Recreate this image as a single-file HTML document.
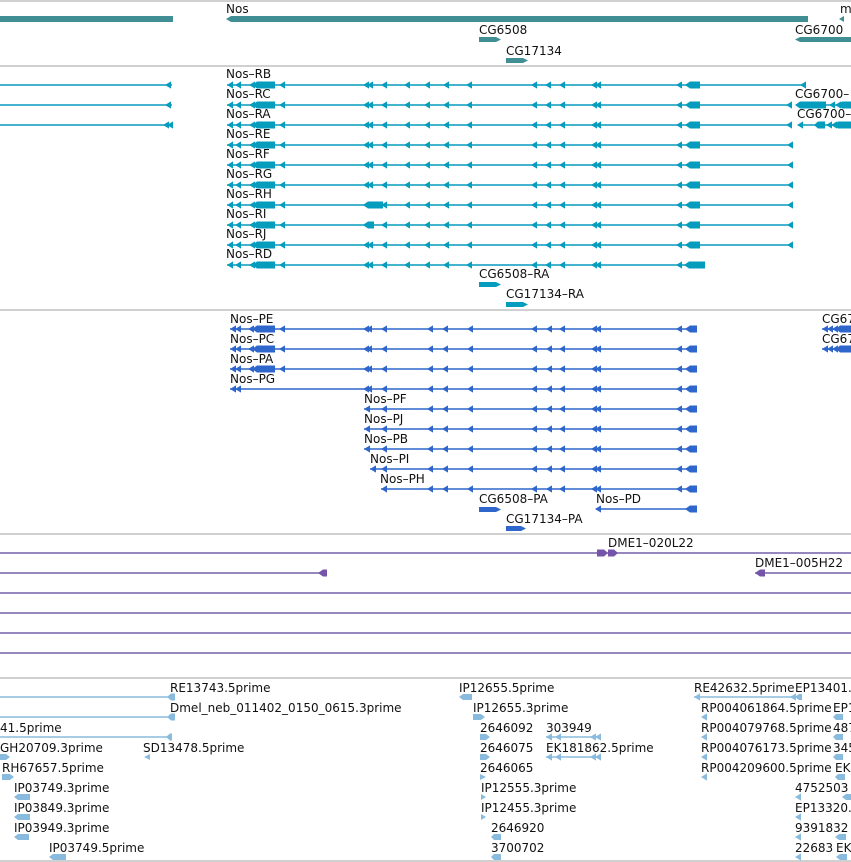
<!DOCTYPE html>
<html><head><meta charset="utf-8"><style>
html,body{margin:0;padding:0;background:#fff;width:851px;height:862px;overflow:hidden}
svg{display:block}
text{font-family:"DejaVu Sans","Liberation Sans",sans-serif;font-size:12px;fill:#111}
</style></head><body>
<svg width="851" height="862" viewBox="0 0 851 862" xmlns="http://www.w3.org/2000/svg">
<defs>
<path id="L" d="M0 0L6 -3.6L6 3.6Z"/>
<path id="R" d="M0 -3.6L6 0L0 3.6Z"/>
<g id="cy">
<use href="#L" x="227"/><use href="#L" x="235"/><use href="#L" x="249"/>
<path d="M252 0L257 -3.5H275V3.5H257Z"/>
<use href="#L" x="279"/><use href="#L" x="363"/><use href="#L" x="367"/><use href="#L" x="381"/>
<use href="#L" x="404"/><use href="#L" x="424"/><use href="#L" x="443"/><use href="#L" x="466"/>
<use href="#L" x="531"/><use href="#L" x="545"/><use href="#L" x="559"/><use href="#L" x="591"/><use href="#L" x="595"/>
<use href="#L" x="676"/><path d="M685 0L690 -3.5H700V3.5H690Z"/>
</g>
<g id="bl">
<use href="#L" x="230"/><use href="#L" x="235"/><use href="#L" x="248"/>
<path d="M252 0L257 -3.5H275V3.5H257Z"/>
<use href="#L" x="279"/><use href="#L" x="363"/><use href="#L" x="366"/><use href="#L" x="381"/>
<use href="#L" x="427"/><use href="#L" x="442"/><use href="#L" x="467"/><use href="#L" x="531"/>
<use href="#L" x="546"/><use href="#L" x="559"/><use href="#L" x="591"/><use href="#L" x="595"/>
<use href="#L" x="676"/><path d="M685 0L690 -3.5H697V3.5H690Z"/>
</g>
</defs>
<g stroke="#c0c0c0" stroke-width="1.5">
<line x1="0" y1="1" x2="851" y2="1"/><line x1="0" y1="66" x2="851" y2="66"/>
<line x1="0" y1="310" x2="851" y2="310"/><line x1="0" y1="534" x2="851" y2="534"/>
<line x1="0" y1="678" x2="851" y2="678"/><line x1="0" y1="861" x2="851" y2="861"/>
</g>
<g fill="#418f94">
<rect x="0" y="16" width="173" height="6"/>
<path d="M226 19L231 16H808V22H231Z"/>
<path d="M839 19L844 16V22Z"/>
<path d="M479 37H496L501 39.5L496 42H479Z"/>
<path d="M506 58H523L528 60.5L523 63H506Z"/>
<path d="M795 39.5L800 37H851V42H800Z"/>
</g>
<text x="226" y="13">Nos</text><text x="840" y="13">m</text>
<text x="479" y="34">CG6508</text><text x="506" y="55">CG17134</text><text x="795" y="34">CG6700</text>
<g fill="#069cbd" stroke="none">
<g stroke="#069cbd" stroke-width="1.5">
<line x1="0" y1="85" x2="172" y2="85"/><line x1="0" y1="105" x2="172" y2="105"/><line x1="0" y1="125" x2="172" y2="125"/>
<line x1="227" y1="85" x2="805" y2="85"/>
<line x1="227" y1="105" x2="790" y2="105"/><line x1="797" y1="105" x2="851" y2="105"/>
<line x1="227" y1="125" x2="790" y2="125"/><line x1="800" y1="125" x2="851" y2="125"/>
<line x1="227" y1="145" x2="791" y2="145"/><line x1="227" y1="165" x2="791" y2="165"/>
<line x1="227" y1="185" x2="791" y2="185"/><line x1="227" y1="205" x2="791" y2="205"/>
<line x1="227" y1="225" x2="791" y2="225"/><line x1="227" y1="245" x2="791" y2="245"/>
<line x1="227" y1="265" x2="700" y2="265"/>
</g>
<use href="#L" x="165" y="85"/><use href="#L" x="165" y="105"/><use href="#L" x="163" y="125"/><use href="#L" x="167" y="125"/>
<use href="#cy" y="85"/><use href="#L" x="800" y="85"/>
<use href="#cy" y="105"/><use href="#L" x="786" y="105"/>
<path d="M795 105L800 101.5H826V108.5H800Z"/><use href="#L" x="829" y="105"/><use href="#L" x="835" y="105"/><path d="M838 105L842 101.5H851V108.5H842Z"/>
<use href="#cy" y="125"/><use href="#L" x="786" y="125"/>
<use href="#L" x="797" y="125"/><path d="M814 125L818 121.5H825V128.5H818Z"/><use href="#L" x="826" y="125"/><use href="#L" x="831" y="125"/><path d="M834 125L838 121.5H851V128.5H838Z"/>
<use href="#cy" y="145"/><use href="#L" x="787" y="145"/>
<use href="#cy" y="165"/><use href="#L" x="787" y="165"/>
<use href="#cy" y="185"/><use href="#L" x="787" y="185"/>
<use href="#cy" y="205"/><use href="#L" x="787" y="205"/><path d="M363 205L368 201.5H383V208.5H368Z"/>
<use href="#cy" y="225"/><use href="#L" x="787" y="225"/><path d="M363 225L368 221.5H374V228.5H368Z"/>
<use href="#cy" y="245"/><use href="#L" x="787" y="245"/>
<use href="#cy" y="265"/><path d="M684 265L689 261.5H705V268.5H689Z"/>
<path d="M479 282H496L501 284.5L496 287H479Z"/>
<path d="M506 302H523L528 304.5L523 307H506Z"/>
</g>
<text x="226" y="78">Nos–RB</text><text x="226" y="98">Nos–RC</text><text x="226" y="118">Nos–RA</text>
<text x="226" y="138">Nos–RE</text><text x="226" y="158">Nos–RF</text><text x="226" y="178">Nos–RG</text>
<text x="226" y="198">Nos–RH</text><text x="226" y="218">Nos–RI</text><text x="226" y="238">Nos–RJ</text>
<text x="226" y="258">Nos–RD</text>
<text x="795" y="98">CG6700–</text><text x="797" y="118">CG6700–</text>
<text x="479" y="278">CG6508–RA</text><text x="506" y="298">CG17134–RA</text>
<g fill="#2f66cc">
<g stroke="#2f66cc" stroke-width="1.5">
<line x1="230" y1="329" x2="697" y2="329"/><line x1="230" y1="349" x2="697" y2="349"/>
<line x1="230" y1="369" x2="697" y2="369"/><line x1="230" y1="389" x2="697" y2="389"/>
<line x1="364" y1="409" x2="697" y2="409"/><line x1="364" y1="429" x2="697" y2="429"/>
<line x1="364" y1="449" x2="697" y2="449"/><line x1="370" y1="469" x2="697" y2="469"/>
<line x1="381" y1="489" x2="697" y2="489"/><line x1="596" y1="509" x2="697" y2="509"/>
<line x1="822" y1="329" x2="851" y2="329"/><line x1="822" y1="349" x2="851" y2="349"/>
</g>
<use href="#bl" y="329"/><use href="#bl" y="349"/><use href="#bl" y="369"/>
<g transform="translate(0,389)"><use href="#L" x="230"/><use href="#L" x="235"/><use href="#L" x="363"/><use href="#L" x="366"/><use href="#L" x="381"/><use href="#L" x="427"/><use href="#L" x="442"/><use href="#L" x="467"/><use href="#L" x="531"/><use href="#L" x="546"/><use href="#L" x="559"/><use href="#L" x="591"/><use href="#L" x="595"/><use href="#L" x="676"/><path d="M685 0L690 -3.5H697V3.5H690Z"/></g>
<g transform="translate(0,409)"><use href="#L" x="364"/><use href="#L" x="381"/><use href="#L" x="427"/><use href="#L" x="442"/><use href="#L" x="467"/><use href="#L" x="531"/><use href="#L" x="546"/><use href="#L" x="559"/><use href="#L" x="591"/><use href="#L" x="595"/><use href="#L" x="676"/><path d="M685 0L690 -3.5H697V3.5H690Z"/></g>
<g transform="translate(0,429)"><use href="#L" x="364"/><use href="#L" x="381"/><use href="#L" x="427"/><use href="#L" x="442"/><use href="#L" x="467"/><use href="#L" x="531"/><use href="#L" x="546"/><use href="#L" x="559"/><use href="#L" x="591"/><use href="#L" x="595"/><use href="#L" x="676"/><path d="M685 0L690 -3.5H697V3.5H690Z"/></g>
<g transform="translate(0,449)"><use href="#L" x="364"/><use href="#L" x="381"/><use href="#L" x="427"/><use href="#L" x="442"/><use href="#L" x="467"/><use href="#L" x="531"/><use href="#L" x="546"/><use href="#L" x="559"/><use href="#L" x="591"/><use href="#L" x="595"/><use href="#L" x="676"/><path d="M685 0L690 -3.5H697V3.5H690Z"/></g>
<g transform="translate(0,469)"><use href="#L" x="370"/><use href="#L" x="381"/><use href="#L" x="427"/><use href="#L" x="442"/><use href="#L" x="467"/><use href="#L" x="531"/><use href="#L" x="546"/><use href="#L" x="559"/><use href="#L" x="591"/><use href="#L" x="595"/><use href="#L" x="676"/><path d="M685 0L690 -3.5H697V3.5H690Z"/></g>
<g transform="translate(0,489)"><use href="#L" x="381"/><use href="#L" x="427"/><use href="#L" x="442"/><use href="#L" x="467"/><use href="#L" x="531"/><use href="#L" x="546"/><use href="#L" x="559"/><use href="#L" x="591"/><use href="#L" x="595"/><use href="#L" x="676"/><path d="M685 0L690 -3.5H697V3.5H690Z"/></g>
<g transform="translate(0,509)"><use href="#L" x="595"/><path d="M685 0L690 -3.5H697V3.5H690Z"/></g>
<g transform="translate(0,329)"><use href="#L" x="822"/><use href="#L" x="827"/><use href="#L" x="832"/><path d="M836 0L840 -3.5H851V3.5H840Z"/></g>
<g transform="translate(0,349)"><use href="#L" x="822"/><use href="#L" x="827"/><use href="#L" x="832"/><path d="M836 0L840 -3.5H851V3.5H840Z"/></g>
<path d="M479 507H496L501 509.5L496 512H479Z"/>
<path d="M506 526H521L526 528.5L521 531H506Z"/>
</g>
<text x="230" y="323">Nos–PE</text><text x="230" y="343">Nos–PC</text><text x="230" y="363">Nos–PA</text>
<text x="230" y="383">Nos–PG</text><text x="364" y="403">Nos–PF</text><text x="364" y="423">Nos–PJ</text>
<text x="364" y="443">Nos–PB</text><text x="370" y="463">Nos–PI</text><text x="380" y="483">Nos–PH</text>
<text x="479" y="503">CG6508–PA</text><text x="596" y="503">Nos–PD</text><text x="506" y="523">CG17134–PA</text>
<text x="822" y="323">CG67</text><text x="822" y="343">CG67</text>
<g stroke="#7360a8" stroke-width="1.4">
<line x1="0" y1="553" x2="851" y2="553"/><line x1="0" y1="573" x2="327" y2="573"/><line x1="755" y1="573" x2="851" y2="573"/>
<line x1="0" y1="593" x2="851" y2="593"/><line x1="0" y1="613" x2="851" y2="613"/>
<line x1="0" y1="633" x2="851" y2="633"/><line x1="0" y1="653" x2="851" y2="653"/>
</g>
<g fill="#7555aa">
<path d="M597 549.5H604L608 553L604 556.5H597Z"/><path d="M608 549.5H614L618 553L614 556.5H608Z"/>
<path d="M318 573L323 569.5H327V576.5H323Z"/>
<path d="M755 573L760 569.5H765V576.5H760Z"/>
</g>
<text x="608" y="547">DME1–020L22</text><text x="755" y="567">DME1–005H22</text>
<g stroke="#88bbdd" stroke-width="1.4">
<line x1="0" y1="697" x2="175" y2="697"/><line x1="0" y1="717" x2="175" y2="717"/><line x1="0" y1="737" x2="172" y2="737"/>
<line x1="546" y1="737" x2="600" y2="737"/><line x1="546" y1="757" x2="600" y2="757"/>
<line x1="694" y1="697" x2="795" y2="697"/>
</g>
<g fill="#88bbdd">
<path d="M167 697L171 693.5H175V700.5H171Z"/><path d="M167 717L171 713.5H175V720.5H171Z"/><path d="M166 737L170 733.5H172V740.5H170Z"/>
<path d="M0 754H6L10 757L6 760H0Z"/><path d="M144 757L150 754V760Z"/>
<path d="M2 774H10L14 777L10 780H2Z"/>
<path d="M14 797L18 794H30V800H18Z"/><path d="M14 817L18 814H30V820H18Z"/><path d="M14 837L18 834H29V840H18Z"/>
<path d="M49 857L53 854H66V860H53Z"/>
<path d="M459 697L463 694H472V700H463Z"/>
<path d="M473 714H481L485 717L481 720H473Z"/>
<path d="M480 734H486L490 737L486 740H480Z"/><path d="M480 754H486L490 757L486 760H480Z"/>
<path d="M480 774L486 777L480 780Z"/><path d="M481 794L486 797L481 800Z"/><path d="M481 814L486 817L481 820Z"/>
<path d="M491 837L494 834H501V840H494Z"/><path d="M491 857L494 854H501V860H494Z"/>
<use href="#L" x="546" y="737"/><use href="#L" x="555" y="737"/><use href="#L" x="590" y="737"/><use href="#L" x="595" y="737"/>
<use href="#L" x="546" y="757"/><use href="#L" x="555" y="757"/><use href="#L" x="590" y="757"/><use href="#L" x="595" y="757"/>
<use href="#L" x="694" y="697"/><use href="#L" x="790" y="697"/><path d="M795 697L799 694H802V700H799Z"/>
<use href="#L" x="701" y="717"/><use href="#L" x="701" y="737"/><use href="#L" x="701" y="757"/><use href="#L" x="701" y="777"/>
<path d="M833 717L836 714H843V720H836Z"/><path d="M833 737L836 734H843V740H836Z"/><path d="M833 757L836 754H843V760H836Z"/><path d="M835 777L838 774H845V780H838Z"/>
<use href="#L" x="795" y="797"/><use href="#L" x="795" y="817"/><use href="#L" x="795" y="837"/><use href="#L" x="795" y="857"/>
<path d="M842 797L846 794H851V800H846Z"/><path d="M835 837L839 834H846V840H839Z"/><path d="M836 857L840 854H847V860H840Z"/>
</g>
<text x="170" y="692">RE13743.5prime</text>
<text x="170" y="712">Dmel_neb_011402_0150_0615.3prime</text>
<text x="0" y="732">41.5prime</text>
<text x="0" y="752">GH20709.3prime</text><text x="143" y="752">SD13478.5prime</text>
<text x="2" y="772">RH67657.5prime</text>
<text x="14" y="792">IP03749.3prime</text><text x="14" y="812">IP03849.3prime</text><text x="14" y="832">IP03949.3prime</text>
<text x="49" y="852">IP03749.5prime</text>
<text x="459" y="692">IP12655.5prime</text><text x="473" y="712">IP12655.3prime</text>
<text x="480" y="732">2646092</text><text x="546" y="732">303949</text>
<text x="480" y="752">2646075</text><text x="546" y="752">EK181862.5prime</text>
<text x="480" y="772">2646065</text><text x="481" y="792">IP12555.3prime</text><text x="481" y="812">IP12455.3prime</text>
<text x="491" y="832">2646920</text><text x="491" y="852">3700702</text>
<text x="694" y="692">RE42632.5prime</text><text x="795" y="692">EP13401.</text>
<text x="701" y="712">RP004061864.5prime</text><text x="833" y="712">EP1</text>
<text x="701" y="732">RP004079768.5prime</text><text x="833" y="732">487</text>
<text x="701" y="752">RP004076173.5prime</text><text x="833" y="752">345</text>
<text x="701" y="772">RP004209600.5prime</text><text x="835" y="772">EK</text>
<text x="795" y="792">4752503</text><text x="795" y="812">EP13320.</text>
<text x="795" y="832">9391832</text><text x="795" y="852">22683</text><text x="836" y="852">EK</text>
</svg>
</body></html>
